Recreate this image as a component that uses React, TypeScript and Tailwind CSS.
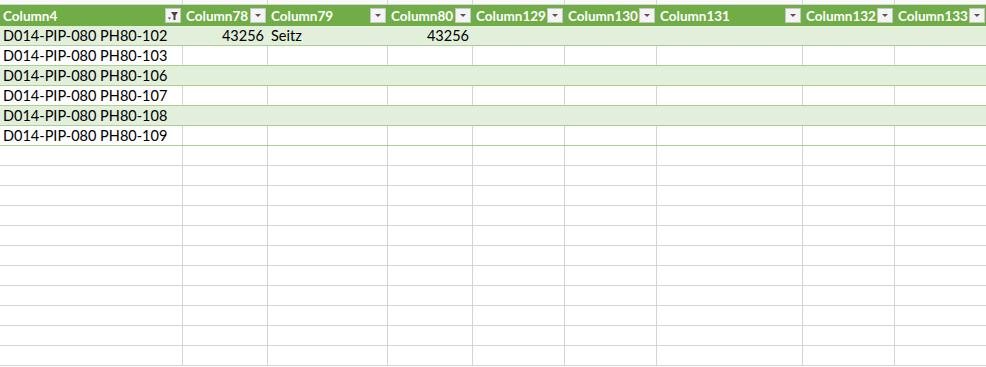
import React from 'react';

const columns = [
  { name: 'Column4', width: 183, filtered: true },
  { name: 'Column78', width: 85 },
  { name: 'Column79', width: 120 },
  { name: 'Column80', width: 85 },
  { name: 'Column129', width: 92 },
  { name: 'Column130', width: 92 },
  { name: 'Column131', width: 146 },
  { name: 'Column132', width: 92 },
  { name: 'Column133', width: 92 },
];

// cells: [text, rightAligned]
const rows: [string, boolean][][] = [
  [['D014-PIP-080 PH80-102', false], ['43256', true], ['Seitz', false], ['43256', true]],
  [['D014-PIP-080 PH80-103', false]],
  [['D014-PIP-080 PH80-106', false]],
  [['D014-PIP-080 PH80-107', false]],
  [['D014-PIP-080 PH80-108', false]],
  [['D014-PIP-080 PH80-109', false]],
];

const FilterButton = ({ filtered }: { filtered?: boolean }) => (
  <div className="w-[16px] h-[15px] shrink-0 bg-[#f4f4f4] border border-[#c6c6c6] flex items-center justify-center">
    {filtered ? (
      <svg width="12" height="10" viewBox="0 0 12 10">
        <path d="M4 1h7L8.5 4.5V9h-2V4.5z" fill="#444" />
        <path d="M1 6.5h3L2.5 8.5z" fill="#444" />
      </svg>
    ) : (
      <svg width="8" height="5" viewBox="0 0 8 5">
        <path d="M1 1h6L4 4z" fill="#555" />
      </svg>
    )}
  </div>
);

export default function App() {
  const emptyRows = Array.from({ length: 11 });
  return (
    <div className="w-[986px] h-[367px] overflow-hidden bg-white text-[14.5px] text-[#000] font-['Lato',sans-serif]">
      {/* strip of the row above */}
      <div className="flex h-[5px] border-b border-[#d4d4d4] bg-[#fafafa]">
        {columns.map((c) => (
          <div key={c.name} className="shrink-0 border-r border-[#d4d4d4]" style={{ width: c.width }} />
        ))}
      </div>
      {/* header */}
      <div className="flex h-[21px] bg-[#70ad47]">
        {columns.map((c) => (
          <div
            key={c.name}
            className="shrink-0 flex items-center justify-between pl-[3px] pr-[1px] border-r border-[#70ad47]"
            style={{ width: c.width }}
          >
            <span className="whitespace-nowrap font-bold text-[13.5px] text-white leading-[16px]">
              {c.name}
            </span>
            <FilterButton filtered={c.filtered} />
          </div>
        ))}
      </div>
      {/* table rows */}
      {rows.map((r, i) => {
        const band = i % 2 === 0;
        return (
          <div
            key={i}
            className={`flex h-[20px] border-b border-[#a9d08e] ${band ? 'bg-[#e2efda]' : 'bg-white'}`}
          >
            {columns.map((c, j) => {
              const cell = r[j];
              return (
                <div
                  key={c.name}
                  className={`shrink-0 flex items-end px-[3px] leading-[18px] ${band ? 'border-r border-[#e2efda]' : 'border-r border-[#d4d4d4]'} ${cell && cell[1] ? 'justify-end' : ''}`}
                  style={{ width: c.width }}
                >
                  {cell ? cell[0] : ''}
                </div>
              );
            })}
          </div>
        );
      })}
      {/* empty sheet rows */}
      {emptyRows.map((_, i) => (
        <div key={i} className="flex h-[20px] border-b border-[#d4d4d4]">
          {columns.map((c) => (
            <div key={c.name} className="shrink-0 border-r border-[#d4d4d4]" style={{ width: c.width }} />
          ))}
        </div>
      ))}
    </div>
  );
}
